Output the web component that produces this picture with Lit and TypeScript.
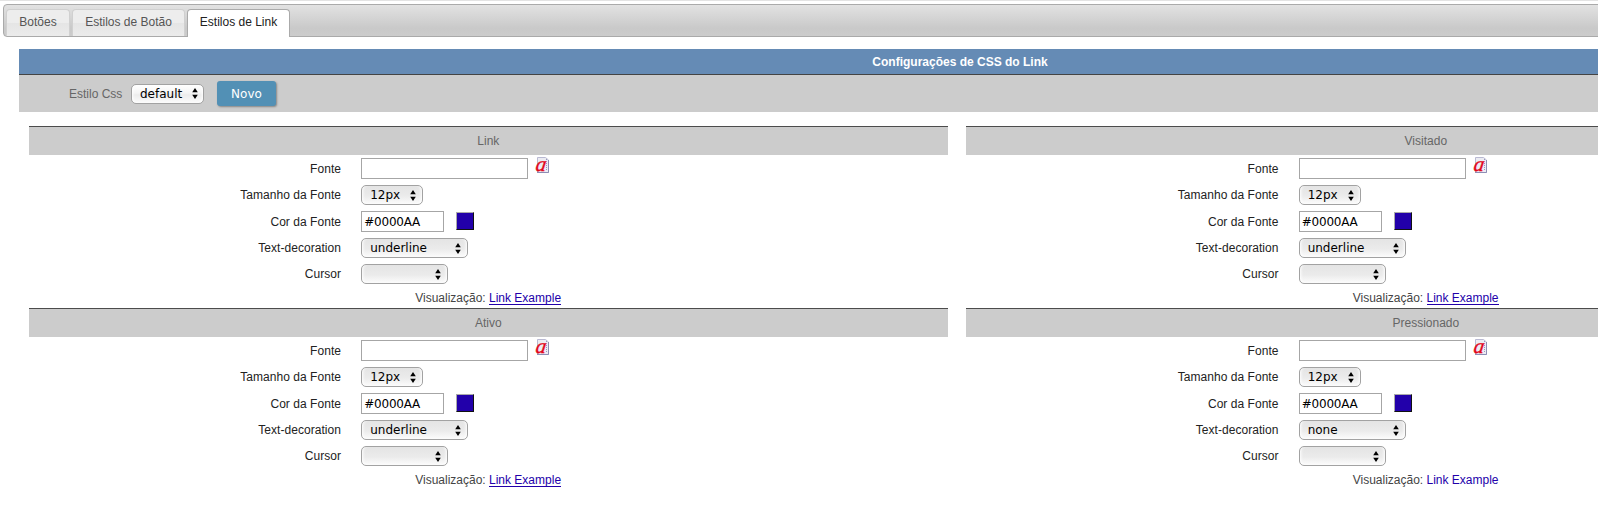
import { LitElement, html, css, svg } from "lit";
import { customElement, property } from "lit/decorators.js";
import { classMap } from "lit/directives/class-map.js";

@customElement("pop-select")
class PopSelect extends LitElement {
  @property() value = "";
  @property() size = "small";

  static styles = css`
    :host { display: block; font: 12px "DejaVu Sans", Verdana, sans-serif; color: #000; }
    .box {
      box-sizing: border-box; height: 20px; display: flex; align-items: center;
      justify-content: space-between; padding: 0 6px 0 8px;
      border: 1px solid #a2a2a2; border-radius: 5px;
      background: linear-gradient(#e4e4e4, #ebebeb 55%, #fcfcfc);
      box-shadow: inset 3px 0 3px -2px #fff, inset -3px 0 3px -2px #fff;
    }
    .text { line-height: 18px; white-space: pre; }
    .tiny { width: 62px; }
    .small { width: 73px; padding-right: 5px; background: linear-gradient(#fff, #f4f4f4 45%, #ececec 55%, #fcfcfc); }
    .medium { width: 87px; }
    .large { width: 107px; }
    .arrows { display: block; flex: none; }
  `;

  render() {
    return html`<div class="box ${this.size}">
      <span class="text">${this.value}</span>
      <svg class="arrows" width="6" height="11" viewBox="0 0 6 11">
        <path d="M3 0L5.8 4.3H.2zM3 11L5.8 6.7H.2z" fill="#000" />
      </svg>
    </div>`;
  }
}

@customElement("style-panel")
class StylePanel extends LitElement {
  @property() heading = "";
  @property() decoration = "underline";

  static styles = css`
    :host { display: block; width: 919.3px; font: 12px "Liberation Sans", Arial, sans-serif; color: #222; }
    .heading {
      box-sizing: border-box; height: 29px; border-top: 1px solid #4c4c4c;
      background: #ccc; color: #666; text-align: center; line-height: 28px;
    }
    .rows { display: grid; grid-template-columns: 312.3px 1fr; column-gap: 20.2px; grid-template-rows: 27px 26px 27px 26px 26px; align-items: center; }
    .label { text-align: right; line-height: 16px; white-space: nowrap; letter-spacing: .04px; }
    .control { display: flex; align-items: center; }
    .input {
      box-sizing: border-box; height: 21px; border: 1px solid #a6a6a6; padding: 1px 0 0 2px;
      font: 12px/19px "DejaVu Sans", Verdana, sans-serif; letter-spacing: -.2px; color: #000; background: #fff;
    }
    .wide { width: 167px; }
    .narrow { width: 83px; }
    .icon { display: block; overflow: visible; margin: -6px 0 0 6px; }
    .swatch {
      box-sizing: border-box; width: 18px; height: 18px; margin: -1px 0 0 12px;
      background: #20a; border: 1px solid #111; border-top-color: #aaa; border-left-color: #aaa;
    }
    .preview { box-sizing: border-box; height: 21px; padding: 1px 0 0 386.5px; line-height: 20px; white-space: nowrap; color: #444; }
    .link { color: #20a; display: inline-block; line-height: 14px; height: 13px; border-bottom: 1px solid transparent; }
    .underline { border-bottom-color: #20a; }
  `;

  fontIcon() {
    return html`<svg class="icon" width="15" height="17" viewBox="0 0 15 17">
      ${svg`<path d="M3.5 .5H11.5L14.5 3V15.5H3.5z" fill="#ececf3" stroke="#b9b9d2"/>
      <path d="M3 15.5H14.5V3" stroke="#8d8db4" fill="none"/>
      <path d="M12.5 2V14" stroke="#9a9abb" stroke-dasharray="1 1" fill="none"/>
      <text transform="translate(1 13.5) skewX(-8)" font-family="Liberation Serif, serif" font-size="21" font-style="italic" fill="#e2081c" stroke="#e2081c" stroke-width=".4">a</text>`}
    </svg>`;
  }

  render() {
    return html`
      <div class="heading">${this.heading}</div>
      <div class="rows">
        <span class="label">Fonte</span>
        <div class="control"><div class="input wide"></div>${this.fontIcon()}</div>
        <span class="label">Tamanho da Fonte</span>
        <div class="control"><pop-select size="tiny" value="12px"></pop-select></div>
        <span class="label">Cor da Fonte</span>
        <div class="control"><div class="input narrow">#0000AA</div><div class="swatch"></div></div>
        <span class="label">Text-decoration</span>
        <div class="control"><pop-select size="large" value=${this.decoration}></pop-select></div>
        <span class="label">Cursor</span>
        <div class="control"><pop-select size="medium"></pop-select></div>
      </div>
      <div class="preview">Visualização: <span class=${classMap({ link: true, underline: this.decoration === "underline" })}>Link Example</span></div>
    `;
  }
}

@customElement("app-root")
class AppRoot extends LitElement {
  static styles = css`
    :host {
      display: block; box-sizing: border-box; height: 522px; overflow: hidden;
      background: #fff; border-top: 1px solid #e3e3e3;
      font: 12px "Liberation Sans", Arial, sans-serif;
    }
    .tabs {
      box-sizing: border-box; width: 1920px; height: 33px; margin: 3px 0 0 3px;
      padding: 4px 0 0 2px; display: flex; gap: 2px;
      border: 1px solid #aaa; border-radius: 4px;
      background: linear-gradient(#e2e2e2, #c9c9c9 75%, #ccc);
    }
    .tab {
      box-sizing: border-box; height: 27px; border: 1px solid #d0d0d0; border-bottom: 0;
      border-radius: 4px 4px 0 0; line-height: 25px; text-align: center; color: #555;
      background: linear-gradient(#ededed 48%, #e5e5e5 52%, #ebebeb); white-space: nowrap;
    }
    .first { width: 64px; }
    .second { width: 113px; }
    .active { width: 103px; height: 28px; background: #fff; border-color: #aaa; color: #212121; }
    .title {
      box-sizing: border-box; width: 1882px; height: 26px; margin: 12px 0 0 19px;
      border-bottom: 1px solid #444; background: #658bb5; color: #fff;
      font-weight: bold; text-align: center; line-height: 26px;
    }
    .toolbar {
      box-sizing: border-box; width: 1882px; height: 37px; margin-left: 19px;
      padding-left: 50px; display: flex; align-items: center; background: #ccc; color: #666;
    }
    .caption { width: 62px; }
    .button {
      width: 59px; height: 25px; margin-left: 13px; border-radius: 3px;
      background: #5290b5; color: #fff; text-align: center;
      font: 12px/26px "DejaVu Sans", Verdana, sans-serif;
      box-shadow: 1px 1px 2px rgba(0, 0, 0, .35);
    }
    .panels { display: grid; grid-template-columns: 919.3px 919.3px; column-gap: 18.2px; padding: 14px 0 0 28.7px; }
  `;

  render() {
    return html`
      <div class="tabs">
        <div class="tab first">Botões</div>
        <div class="tab second">Estilos de Botão</div>
        <div class="tab active">Estilos de Link</div>
      </div>
      <div class="title">Configurações de CSS do Link</div>
      <div class="toolbar">
        <span class="caption">Estilo Css</span>
        <pop-select size="small" value="default"></pop-select>
        <div class="button">Novo</div>
      </div>
      <div class="panels">
        <style-panel heading="Link"></style-panel>
        <style-panel heading="Visitado"></style-panel>
        <style-panel heading="Ativo"></style-panel>
        <style-panel heading="Pressionado" decoration="none"></style-panel>
      </div>
    `;
  }
}
